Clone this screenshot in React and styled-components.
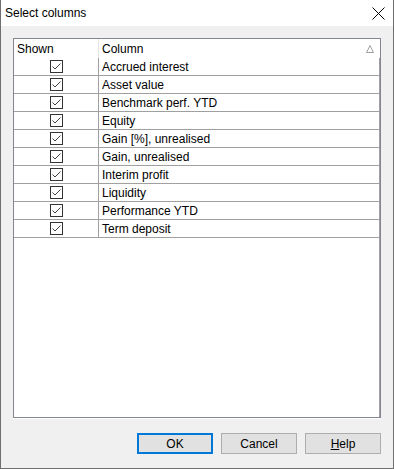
import styled, { createGlobalStyle } from "styled-components";

const GlobalStyle = createGlobalStyle`
  html, body {
    margin: 0;
    padding: 0;
    background: #f0f0f0;
  }
  body {
    font-family: "Liberation Sans", Arial, sans-serif;
    font-size: 12px;
    color: #000;
  }
`;

const Window = styled.div`
  box-sizing: border-box;
  width: 394px;
  height: 469px;
  border: 1px solid #6f6f6f;
  border-top: none;
  background: #f0f0f0;
  display: flex;
  flex-direction: column;
`;

const TitleBar = styled.div`
  height: 26px;
  background: #fff;
  display: flex;
  align-items: center;
  justify-content: space-between;
  padding: 0 8px 0 4px;
  font-size: 12px;
`;

const CloseButton = styled.div`
  width: 14px;
  height: 14px;
  display: flex;
  align-items: center;
  justify-content: center;
`;

const Body = styled.div`
  flex: 1;
  display: flex;
  flex-direction: column;
  padding: 12px 12px 14px 12px;
`;

const ListBox = styled.div`
  box-sizing: border-box;
  height: 380px;
  background: #fff;
  border: 1px solid #828790;
  box-shadow: 0 1px 0 #fff;
  display: flex;
  flex-direction: column;
`;

const Row = styled.div`
  display: grid;
  grid-template-columns: 85px 1fr;
  height: ${(p) => (p.$header ? 19 : 17)}px;
  border-bottom: ${(p) => (p.$header ? "none" : "1px solid #a0a0a0")};
  align-items: center;
`;

const Rows = styled.div`
  flex: 1;
  border-right: 1px solid #a0a0a0;
  display: flex;
  flex-direction: column;
`;

const Filler = styled.div`
  flex: 1;
  background: #fff;
`;

const Cell = styled.div`
  height: 100%;
  display: flex;
  align-items: center;
  justify-content: ${(p) => (p.$center ? "center" : "flex-start")};
  padding-left: ${(p) => (p.$center ? 0 : 3)}px;
  border-right: ${(p) =>
    p.$sep ? `1px solid ${p.$header ? "#e5e5e5" : "#a0a0a0"}` : "none"};
  white-space: nowrap;
  overflow: hidden;
`;

const HeaderCell = styled(Cell)`
  justify-content: space-between;
  padding-right: 6px;
`;

const Buttons = styled.div`
  display: flex;
  justify-content: flex-end;
  gap: 8px;
  margin-top: 15px;
`;

const Button = styled.button`
  box-sizing: border-box;
  width: 76px;
  height: 21px;
  background: #e1e1e1;
  border: ${(p) => (p.$default ? "2px solid #0078d7" : "1px solid #adadad")};
  font-family: inherit;
  font-size: 12px;
  color: #000;
  padding: 0;
  display: flex;
  align-items: center;
  justify-content: center;
`;

const Check = () => (
  <svg width="13" height="13" viewBox="0 0 13 13">
    <rect x="0.5" y="0.5" width="12" height="12" fill="#fff" stroke="#333" />
    <path d="M2.5 6.5 L5 9 L10.5 3.5" fill="none" stroke="#444" strokeWidth="1" />
  </svg>
);

const columns = [
  "Accrued interest",
  "Asset value",
  "Benchmark perf. YTD",
  "Equity",
  "Gain [%], unrealised",
  "Gain, unrealised",
  "Interim profit",
  "Liquidity",
  "Performance YTD",
  "Term deposit",
];

export default function App() {
  return (
    <>
      <GlobalStyle />
      <Window>
        <TitleBar>
          <span>Select columns</span>
          <CloseButton>
            <svg width="13" height="13" viewBox="0 0 13 13">
              <path d="M0.5 0.5 L12.5 12.5 M12.5 0.5 L0.5 12.5" stroke="#000" strokeWidth="1" />
            </svg>
          </CloseButton>
        </TitleBar>
        <Body>
          <ListBox>
            <Row $header>
              <Cell $sep $header>Shown</Cell>
              <HeaderCell>
                <span>Column</span>
                <svg width="8" height="8" viewBox="0 0 8 8">
                  <path d="M4 0.5 L7.5 7.5 L0.5 7.5 Z" fill="none" stroke="#a0a0a0" />
                </svg>
              </HeaderCell>
            </Row>
            <Rows>
              {columns.map((c) => (
                <Row key={c}>
                  <Cell $sep $center>
                    <Check />
                  </Cell>
                  <Cell>{c}</Cell>
                </Row>
              ))}
              <Filler />
            </Rows>
          </ListBox>
          <Buttons>
            <Button $default>OK</Button>
            <Button>Cancel</Button>
            <Button>
              <span>
                <u>H</u>elp
              </span>
            </Button>
          </Buttons>
        </Body>
      </Window>
    </>
  );
}
